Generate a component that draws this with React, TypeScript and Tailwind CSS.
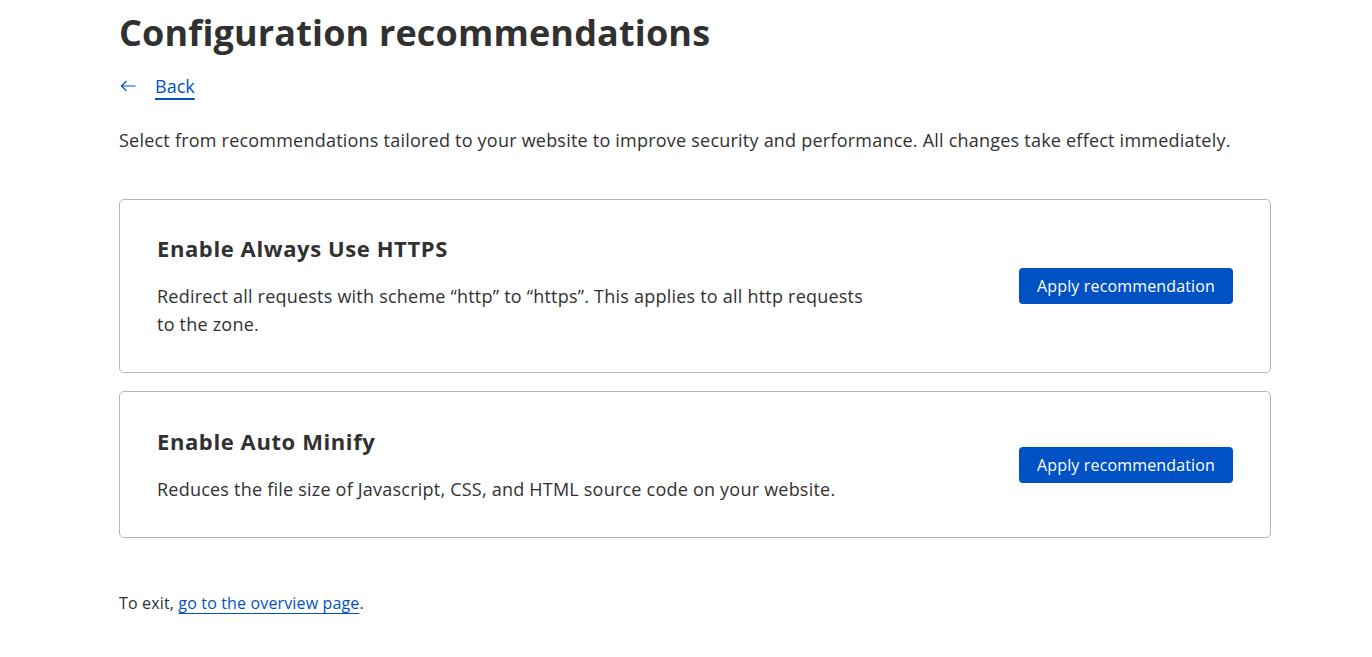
interface Recommendation {
  title: string;
  description: string;
}

const recommendations: Recommendation[] = [
  {
    title: 'Enable Always Use HTTPS',
    description:
      'Redirect all requests with scheme \u201chttp\u201d to \u201chttps\u201d. This applies to all http requests to the zone.',
  },
  {
    title: 'Enable Auto Minify',
    description: 'Reduces the file size of Javascript, CSS, and HTML source code on your website.',
  },
];

function RecommendationCard({ title, description }: Recommendation) {
  return (
    <div className="flex min-h-[147px] items-center justify-between rounded-[5px] border border-[#b6b6b6] px-[37px] py-[34px]">
      <div className="max-w-[715px]">
        <h2 className="text-[22px] font-bold leading-[28px] tracking-[0.6px] text-[#313131]">{title}</h2>
        <p className="mt-[20px] text-[18px] leading-[28px] tracking-[0.22px] text-[#313131]">{description}</p>
      </div>
      <button className="h-[36px] rounded-[4px] bg-[#0051c3] px-[18px] text-[16px] tracking-[0.15px] text-white">
        Apply recommendation
      </button>
    </div>
  );
}

export default function App() {
  return (
    <div className="min-h-screen bg-white font-['Open_Sans',sans-serif] text-[#313131]">
      <div className="ml-[119px] w-[1152px]">
        <h1 className="pt-[10px] text-[36px] font-bold leading-[46px] tracking-[0.15px] text-[#313131]">
          Configuration recommendations
        </h1>

        <a href="#" className="mt-[18px] flex items-center text-[#0051c3]">
          {/* back arrow */}
          <svg width="16" height="12" viewBox="0 0 16 12" fill="none" stroke="currentColor" strokeWidth="1.2" className="ml-px">
            <path d="M15.5 6H1.5M6.5 1L1.5 6L6.5 11" strokeLinejoin="round" />
          </svg>
          <span className="ml-[19px] text-[18px] leading-[24px] underline decoration-[1.5px] underline-offset-[5px]">Back</span>
        </a>

        <p className="mt-[28px] text-[18px] leading-[28px] tracking-[0.22px]">
          Select from recommendations tailored to your website to improve security and performance. All changes take
          effect immediately.
        </p>

        <div className="mt-[45px] flex flex-col gap-[18px]">
          {recommendations.map((r) => (
            <RecommendationCard key={r.title} {...r} />
          ))}
        </div>

        <p className="mt-[53px] text-[16px] leading-[24px] tracking-[0.15px]">
          To exit,{' '}
          <a href="#" className="text-[#0051c3] underline underline-offset-4">
            go to the overview page
          </a>
          .
        </p>
      </div>
    </div>
  );
}
